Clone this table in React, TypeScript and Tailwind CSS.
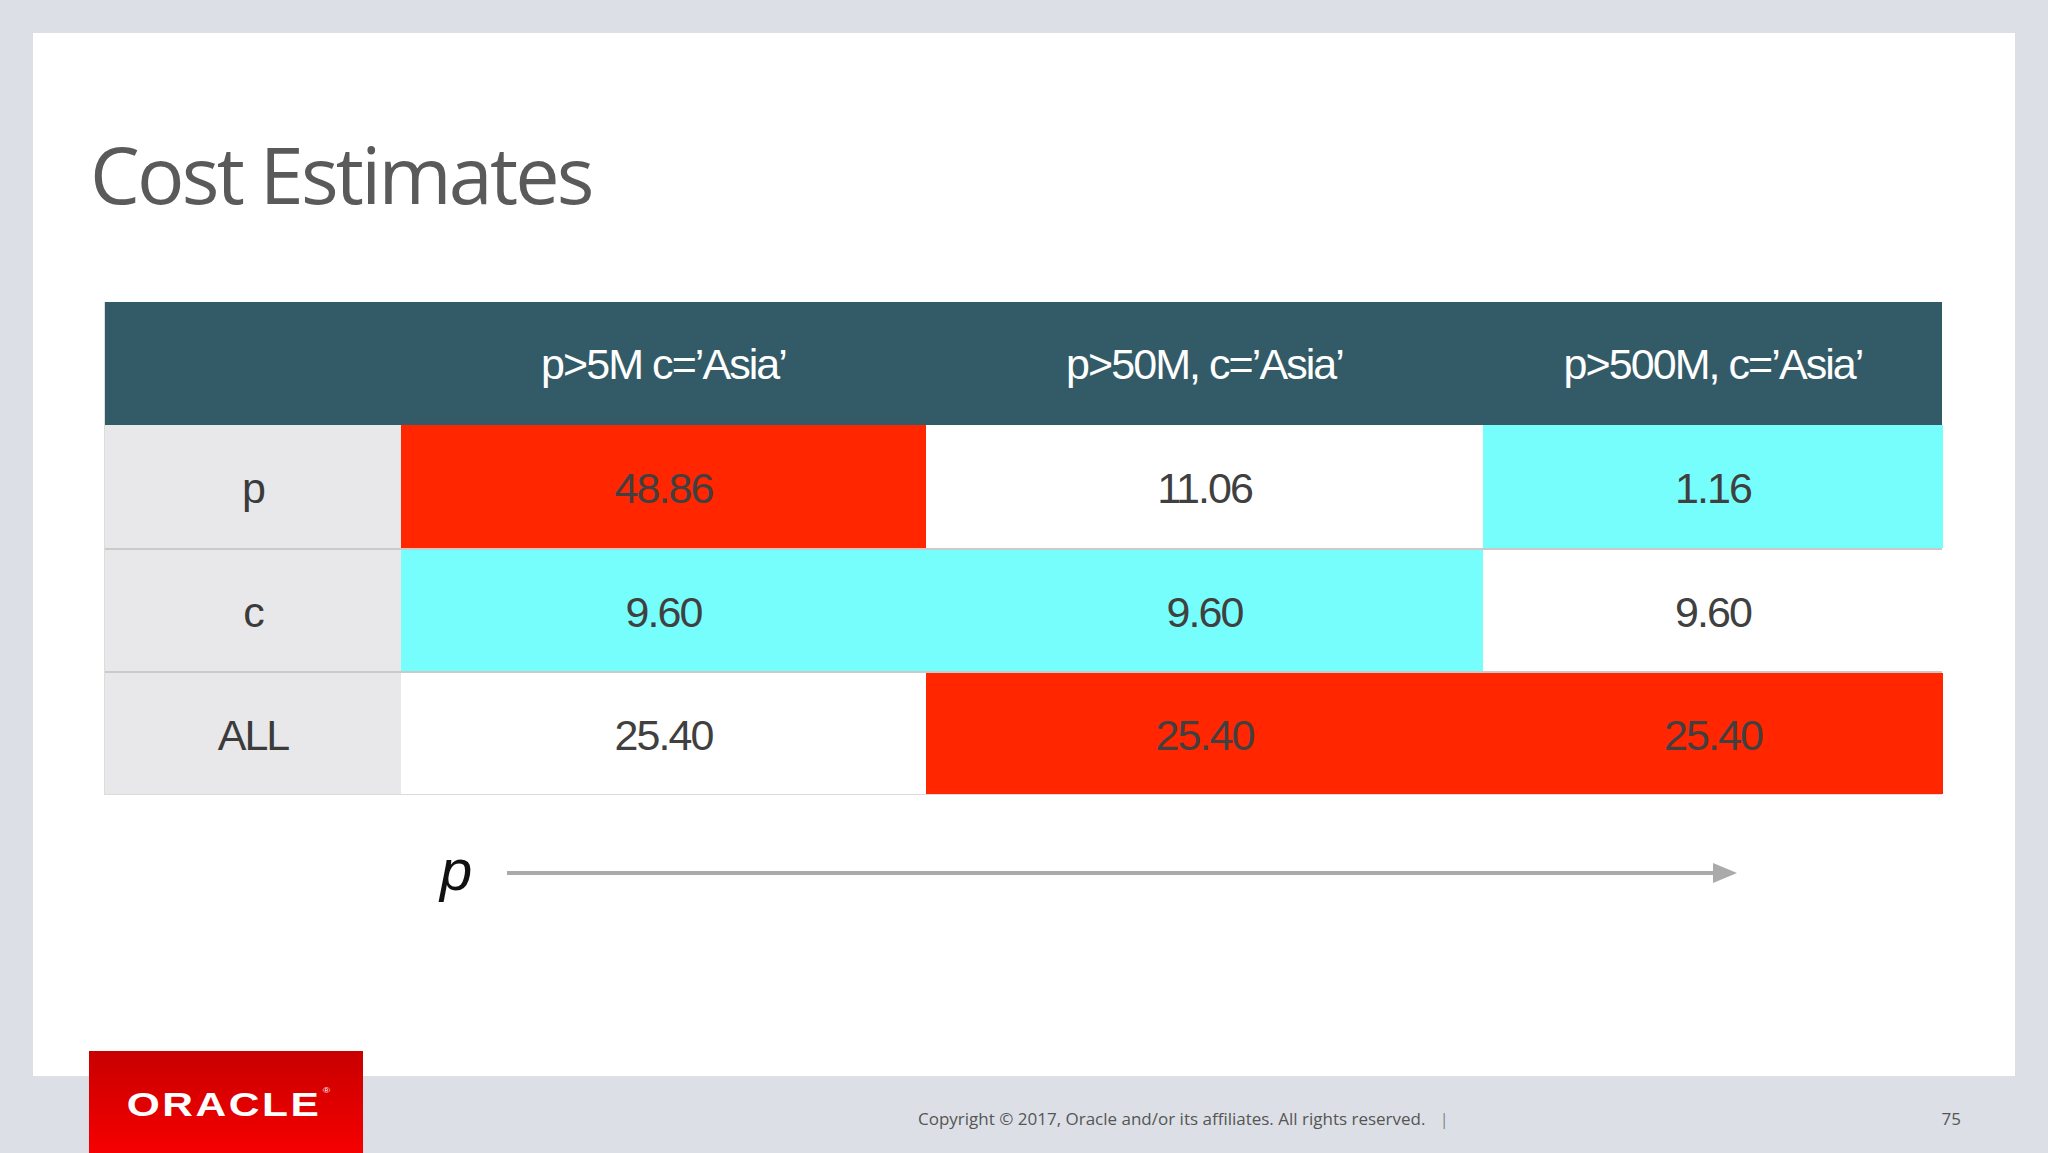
import React from 'react';

type Cell = { v: string; bg: string };

const header = ["p>5M c=’Asia’", "p>50M, c=’Asia’", "p>500M, c=’Asia’"];

const rows: { label: string; cells: Cell[] }[] = [
  {
    label: 'p',
    cells: [
      { v: '48.86', bg: 'bg-[#ff2600]' },
      { v: '11.06', bg: 'bg-white' },
      { v: '1.16', bg: 'bg-[#76fefd]' },
    ],
  },
  {
    label: 'c',
    cells: [
      { v: '9.60', bg: 'bg-[#76fefd]' },
      { v: '9.60', bg: 'bg-[#76fefd]' },
      { v: '9.60', bg: 'bg-white' },
    ],
  },
  {
    label: 'ALL',
    cells: [
      { v: '25.40', bg: 'bg-white' },
      { v: '25.40', bg: 'bg-[#ff2600]' },
      { v: '25.40', bg: 'bg-[#ff2600]' },
    ],
  },
];

const cellText = "text-[43px] tracking-[-0.045em] font-['Liberation_Sans',Arial,sans-serif]";

const App: React.FC = () => {
  return (
    <div className="relative w-[2048px] h-[1153px] bg-[#dce0e6] overflow-hidden flex flex-col">
      {/* Slide */}
      <div className="mx-[33px] mt-[33px] h-[1043px] bg-white flex flex-col">
        <h1 className="pl-[57px] pt-[101px] text-[79px] leading-none tracking-[-0.035em] text-[#5a5a5a] font-['Open_Sans',sans-serif]">
          Cost Estimates
        </h1>

        {/* Table */}
        <div className="ml-[71px] mt-[89px] w-[1838px] border-l border-b border-[#dcdcdc]">
          <div className="grid grid-cols-[296px_525px_557px_460px] h-[123px] bg-[#335b67] text-white">
            <div />
            {header.map((h) => (
              <div key={h} className={`flex items-center justify-center pt-[2px] ${cellText}`}>
                {h}
              </div>
            ))}
          </div>
          {rows.map((r, i) => (
            <div
              key={r.label}
              className={`grid grid-cols-[296px_525px_557px_460px] h-[123px] ${i > 0 ? 'border-t-2 border-[#cacaca]' : ''}`}
            >
              <div className={`flex items-center justify-center pt-[4px] bg-[#e8e8ea] text-[#3b3b3b] ${cellText}`}>
                {r.label}
              </div>
              {r.cells.map((c, j) => (
                <div key={j} className={`flex items-center justify-center pt-[4px] ${c.bg} text-[#404040] ${cellText}`}>
                  {c.v}
                </div>
              ))}
            </div>
          ))}
        </div>

        {/* p axis arrow */}
        <div className="flex items-center ml-[407px] mt-[50px] h-[56px]">
          <span className="w-[67px] text-[58px] leading-none italic font-light text-[#111] font-['Liberation_Sans',Arial,sans-serif] -mt-[6px]">
            p
          </span>
          <svg width="1232" height="24" viewBox="0 0 1232 24">
            <line x1="0" y1="12" x2="1212" y2="12" stroke="#aaaaaa" strokeWidth="4" />
            <polygon points="1206,2 1230,12 1206,22" fill="#aaaaaa" />
          </svg>
        </div>
      </div>

      {/* Footer */}
      <div className="flex-1 flex items-center pl-[918px] pr-[87px] pt-[8px] text-[#555] font-['Open_Sans',sans-serif] text-[17px]">
        <span>Copyright © 2017, Oracle and/or its affiliates. All rights reserved.</span>
        <span className="ml-[14px] text-[#888]">|</span>
        <span className="ml-auto">75</span>
      </div>

      {/* Oracle logo */}
      <div className="absolute left-[89px] top-[1051px] w-[274px] h-[102px] bg-linear-to-b from-[#c80000] to-[#f60000] flex justify-center pt-[36px]">
        <div className="flex items-start scale-x-125 origin-center ml-[4px]">
          <span className="text-white text-[34px] leading-none font-bold tracking-[0.06em] font-['Liberation_Sans',Arial,sans-serif]">
            ORACLE
          </span>
          <span className="text-white text-[8px] leading-none ml-[1px] font-['Liberation_Sans',Arial,sans-serif]">®</span>
        </div>
      </div>
    </div>
  );
};

export default App;
